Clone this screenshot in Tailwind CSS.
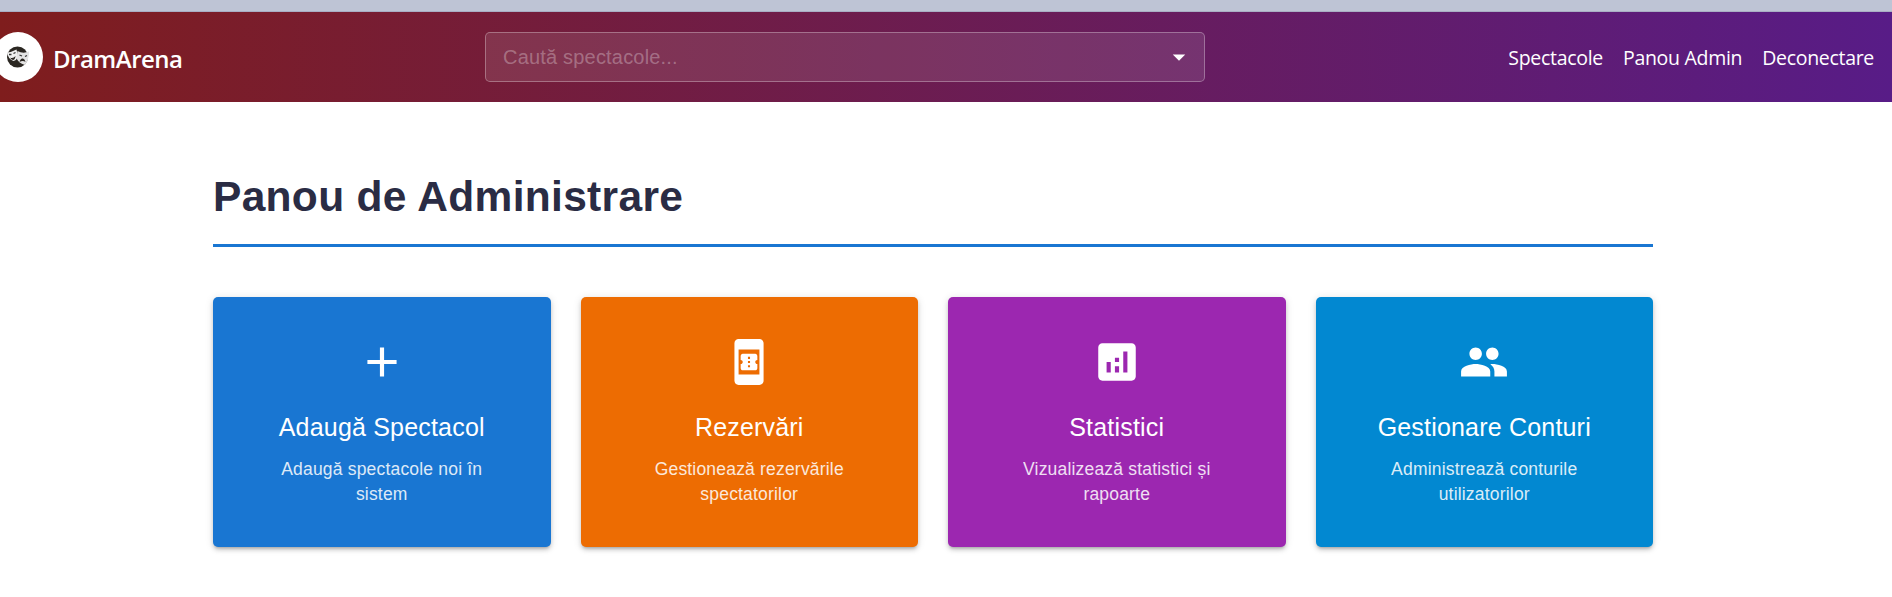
<!DOCTYPE html>
<html lang="ro">
<head>
<meta charset="utf-8">
<title>DramArena</title>
<script src="https://cdn.jsdelivr.net/npm/@tailwindcss/browser@4"></script>
</head>
<body class="h-[597px] overflow-hidden bg-white font-['Liberation_Sans',Arial,sans-serif]">
<div class="h-3 border-b border-[#a9aec4] bg-[#bec4d5]"></div>
<header class="relative flex h-[90px] items-center bg-linear-[to_right,#7f1d1d,#581c87] font-['Open_Sans',sans-serif] text-white">
  <div class="-ml-[7px] flex w-[492px] items-center">
    <div class="flex size-[50px] items-center justify-center rounded-full bg-white">
      <svg class="size-[22px]" viewBox="0 0 22 22">
        <circle cx="10.500" cy="11" r="10.500" fill="#2b2722"/>
        <path d="M0 6.500Q5 6 9.500 3.500L10.500 8Q11 14 6.500 15Q1 13 0 6.500Z" fill="#f0f0f0"/>
        <path d="M10.500 5Q16 8 22 5.500Q22.500 13 18 19Q11 17 9.500 12Z" fill="#e4e4e4"/>
        <path d="M2 8.500h2.500M6.500 7.500l2-1M12.500 9l2.500 1M18 10.500l2-1" fill="none" stroke="#333" stroke-width="1.300"/>
        <path d="M3 11.500q3 1.500 5.500-1.500-.5 4-2.500 4-2-.5-3-2.500zM12.500 16q1-4 3.500-3.500 2 .5 2.500 3.500-2.500-2-6 0z" fill="#2b2722"/>
      </svg>
    </div>
    <span class="mt-[3px] ml-2.5 text-[24px] font-semibold tracking-[-0.5px]">DramArena</span>
  </div>
  <div class="flex h-[50px] w-[720px] items-center justify-between rounded-[5px] border border-white/30 bg-white/10 pr-[10px] pl-[17px] font-['Liberation_Sans',Arial,sans-serif]">
    <span class="text-[20px] tracking-[0.19px] text-white/30">Caută spectacole...</span>
    <svg class="size-[30px]" viewBox="0 0 24 24" fill="white"><path d="M7 10l5 5 5-5z"/></svg>
  </div>
  <nav class="mt-[2px] mr-[18px] ml-auto flex gap-5 text-[19.5px] tracking-[-0.3px]">
    <a>Spectacole</a><a>Panou Admin</a><a>Deconectare</a>
  </nav>
</header>
<main class="ml-[213px] w-[1440px] pt-[66px]">
  <h1 class="h-[79px] border-b-[3px] border-[#1976d2] text-[42.5px] leading-[58px] font-bold tracking-[0.31px] text-[#2a2c44]">Panou de Administrare</h1>
  <div class="mt-[50px] grid grid-cols-4 gap-[30px] text-center text-white">
    <section class="flex h-[250px] flex-col items-center rounded-[5px] bg-[#1976d2] px-[60px] pt-10 shadow-[0_3px_3px_-2px_rgba(0,0,0,.2),0_3px_4px_rgba(0,0,0,.14),0_1px_8px_rgba(0,0,0,.12)]">
      <svg class="size-[50px]" viewBox="0 0 24 24" fill="currentColor"><path d="M19 13h-6v6h-2v-6H5v-2h6V5h2v6h6z"/></svg>
      <h2 class="mt-5 text-[25px] leading-[40px] tracking-[0.19px] whitespace-nowrap">Adaugă Spectacol</h2>
      <p class="mt-[10px] text-[17.5px] leading-[25px] tracking-[0.19px] opacity-85">Adaugă spectacole noi în<br>sistem</p>
    </section>
    <section class="flex h-[250px] flex-col items-center rounded-[5px] bg-[#ed6c02] px-[60px] pt-10 shadow-[0_3px_3px_-2px_rgba(0,0,0,.2),0_3px_4px_rgba(0,0,0,.14),0_1px_8px_rgba(0,0,0,.12)]">
      <svg class="size-[50px]" viewBox="0 0 24 24" fill="currentColor"><path fill-rule="evenodd" d="M17 1.010 7 1c-1.100 0-1.990.9-1.990 2v18c0 1.100.89 2 1.990 2h10c1.100 0 2-.9 2-2V3c0-1.100-.9-1.990-2-1.990M17 18H7V6h10z"/><path fill-rule="evenodd" d="M16 11V9.140c0-.63-.45-1.140-1-1.140H9c-.55 0-1 .51-1 1.140V11c.55 0 1 .45 1 1s-.45 1-1 1v1.860c0 .63.45 1.140 1 1.140h6c.55 0 1-.51 1-1.140V13c-.55 0-1-.45-1-1s.45-1 1-1m-3.500 3.500h-1v-1h1zm0-2h-1v-1h1zm0-2h-1v-1h1z"/></svg>
      <h2 class="mt-5 text-[25px] leading-[40px] tracking-[0.19px] whitespace-nowrap">Rezervări</h2>
      <p class="mt-[10px] text-[17.5px] leading-[25px] tracking-[0.19px] opacity-85">Gestionează rezervările<br>spectatorilor</p>
    </section>
    <section class="flex h-[250px] flex-col items-center rounded-[5px] bg-[#9c27b0] px-[60px] pt-10 shadow-[0_3px_3px_-2px_rgba(0,0,0,.2),0_3px_4px_rgba(0,0,0,.14),0_1px_8px_rgba(0,0,0,.12)]">
      <svg class="size-[50px]" viewBox="0 0 24 24" fill="currentColor"><path fill-rule="evenodd" d="M19 3H5c-1.100 0-2 .9-2 2v14c0 1.100.9 2 2 2h14c1.100 0 2-.9 2-2V5c0-1.100-.9-2-2-2M9 17H7v-5h2zm4 0h-2v-3h2zm0-5h-2v-2h2zm4 5h-2V7h2z"/></svg>
      <h2 class="mt-5 text-[25px] leading-[40px] tracking-[0.19px] whitespace-nowrap">Statistici</h2>
      <p class="mt-[10px] text-[17.5px] leading-[25px] tracking-[0.19px] opacity-85">Vizualizează statistici și<br>rapoarte</p>
    </section>
    <section class="flex h-[250px] flex-col items-center rounded-[5px] bg-[#0288d1] px-[60px] pt-10 shadow-[0_3px_3px_-2px_rgba(0,0,0,.2),0_3px_4px_rgba(0,0,0,.14),0_1px_8px_rgba(0,0,0,.12)]">
      <svg class="size-[50px]" viewBox="0 0 24 24" fill="currentColor"><path d="M16 11c1.660 0 2.990-1.340 2.990-3S17.660 5 16 5s-3 1.340-3 3 1.340 3 3 3m-8 0c1.660 0 2.990-1.340 2.990-3S9.660 5 8 5 5 6.340 5 8s1.340 3 3 3m0 2c-2.330 0-7 1.170-7 3.500V19h14v-2.500c0-2.330-4.670-3.500-7-3.500m8 0c-.29 0-.62.020-.97.050 1.160.84 1.970 1.970 1.970 3.450V19h6v-2.500c0-2.330-4.670-3.500-7-3.500"/></svg>
      <h2 class="mt-5 text-[25px] leading-[40px] tracking-[0.19px] whitespace-nowrap">Gestionare Conturi</h2>
      <p class="mt-[10px] text-[17.5px] leading-[25px] tracking-[0.19px] opacity-85">Administrează conturile<br>utilizatorilor</p>
    </section>
  </div>
</main>
</body>
</html>
